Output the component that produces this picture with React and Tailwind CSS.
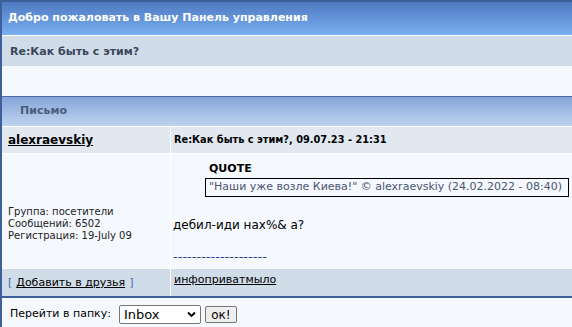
import React from "react";

const App = () => {
  return (
    <div className="min-h-[327px] w-full bg-[#f5f8fd] border-l-2 border-t-2 border-[#3d5f9a] font-['DejaVu_Sans',Verdana,sans-serif] text-black">
      {/* header */}
      <div className="h-[33px] bg-linear-to-b from-[#4f79c1] to-[#79aff1] flex items-center pl-[6px] text-[11px] font-bold text-white">
        Добро пожаловать в Вашу Панель управления
      </div>
      <div className="h-px bg-white" />
      <div className="h-[30px] bg-[#d1dce9] flex items-center pl-[8px] pt-[2px] text-[11px] font-bold text-[#3b475a]">
        Re:Как быть с этим?
      </div>
      <div className="h-[30px]" />

      {/* message */}
      <div className="border-t border-[#4a6aa6] h-[30px] bg-linear-to-b from-[#86a6d9] to-[#bed3ef] flex items-center pl-[18px] text-[11px] font-bold text-[#4b5b7b]">
        Письмо
      </div>
      <div className="h-px bg-white" />
      <div className="grid grid-cols-[168px_1fr] gap-px bg-white">
        <div className="h-[26px] bg-[#e2e8f0] flex items-center pl-[6px]">
          <a className="text-[12px] font-bold underline">alexraevskiy</a>
        </div>
        <div className="h-[26px] bg-[#e2e8f0] flex items-center pl-[3px] text-[9.8px] font-bold">
          Re:Как быть с этим?, 09.07.23 - 21:31
        </div>

        <div className="h-[114px] bg-[#f5f8fd] pl-[6px] pt-[52px] text-[10px] leading-[12px] text-[#222]">
          <div>Группа: посетители</div>
          <div>Сообщений: 6502</div>
          <div>Регистрация: 19-July 09</div>
        </div>
        <div className="h-[114px] bg-[#f5f8fd] pl-[2px] pt-[8px]">
          <div className="ml-[36px] text-[11px] font-bold leading-[14px]">QUOTE</div>
          <div className="ml-[32px] mr-[3px] mt-[2px] h-[19px] border border-black bg-[#f5f8fd] flex items-center px-[3px] text-[11px] text-[#4a5672]">
            "Наши уже возле Киева!" © alexraevskiy (24.02.2022 - 08:40)
          </div>
          <div className="mt-[20px] text-[12px] leading-[16px]">дебил-иди нах%& а?</div>
          <div className="mt-[17px] text-[13px] leading-[14px] text-[#2e3d8c]">--------------------</div>
        </div>

        <div className="h-[27px] bg-[#d1dce9] flex items-center pl-[6px] pt-[2px] text-[11px]">
          <span className="text-[#4a6aa8]">[</span>
          <a className="mx-[4px] underline">Добавить в друзья</a>
          <span className="text-[#4a6aa8]">]</span>
        </div>
        <div className="h-[27px] bg-[#d1dce9] pl-[3px] pt-[3px] text-[11px]">
          <a className="underline">инфоприватмыло</a>
        </div>
      </div>

      {/* footer */}
      <div className="border-t-2 border-[#3d5f9a] flex items-center pt-[7px] pb-[2px] pl-[8px] text-[11px]">
        <span>Перейти в папку:</span>
        <div className="ml-[8px] relative w-[82px] h-[19px] border border-[#767676] rounded-[2px] bg-white flex items-center pl-[4px] text-[13px]">
          Inbox
          <svg className="absolute right-[4px] top-[5px]" width="9" height="7" viewBox="0 0 9 7">
            <path d="M1 1.5 L4.5 5 L8 1.5" fill="none" stroke="#000" strokeWidth="1.8" />
          </svg>
        </div>
        <button className="ml-[4px] h-[17px] w-[32px] border border-[#767676] rounded-[2px] bg-[#efefef] text-[12px] flex items-center justify-center">
          ок!
        </button>
      </div>
    </div>
  );
};

export default App;
